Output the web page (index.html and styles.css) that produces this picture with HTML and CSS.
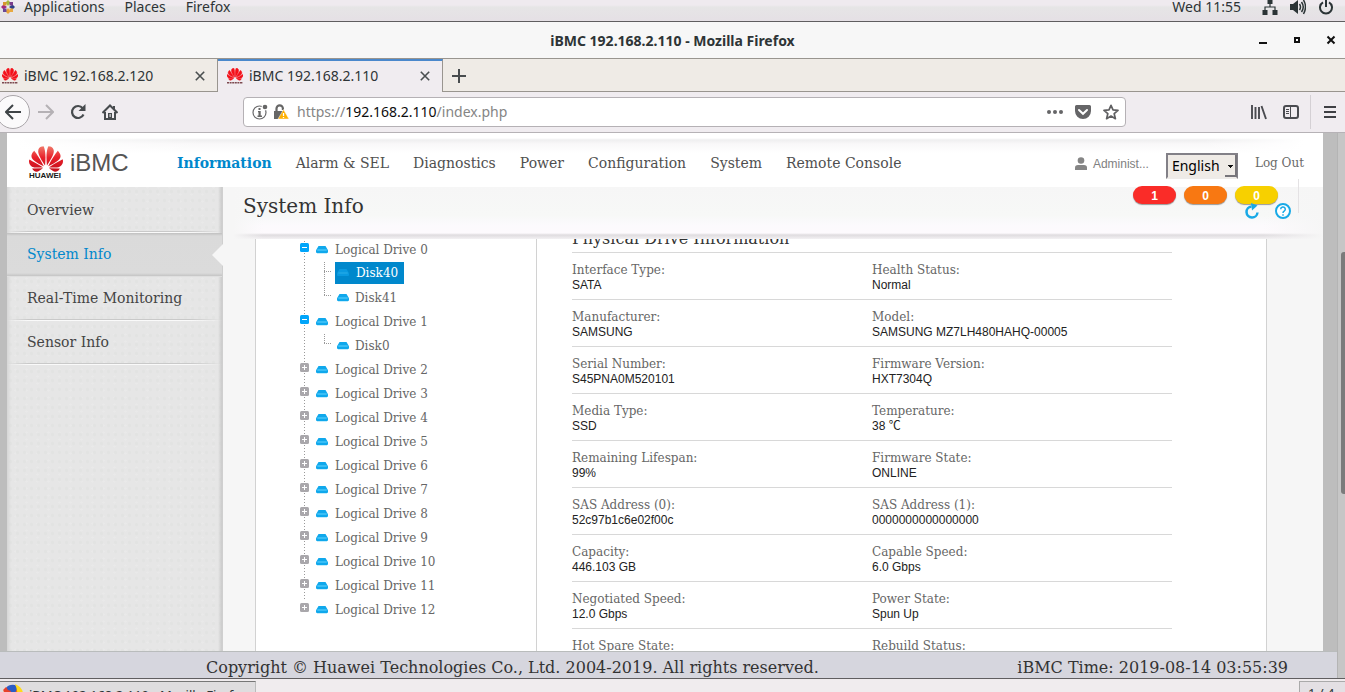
FILE: index.html
```html
<!DOCTYPE html>
<html lang="en">
<head>
<meta charset="utf-8">
<title>iBMC 192.168.2.110</title>
<link rel="stylesheet" href="styles.css">
</head>
<body>
<svg class="defs" aria-hidden="true">
  <defs>
    <linearGradient id="petal" x1="0" y1="0" x2="0" y2="1"><stop offset="0" stop-color="#f0796a"/><stop offset=".45" stop-color="#e8202a"/><stop offset="1" stop-color="#c4101c"/></linearGradient>
    <path id="petals" d="M3.67 6.14S1.82 7.91 1.72 9.78v.35c.08 1.51 1.22 2.4 1.22 2.4 1.83 1.79 6.26 4.04 7.3 4.55 0 0 .06.03.1-.01l.02-.04v-.04C7.52 10.8 3.67 6.14 3.67 6.14zM9.65 18.6c-.02-.08-.1-.08-.1-.08l-7.38.26c.8 1.43 2.15 2.53 3.56 2.2.96-.25 3.16-1.78 3.88-2.3.06-.05.04-.09.04-.09zm.08-.78C6.49 15.63.21 12.28.21 12.28c-.15.46-.2.9-.21 1.3v.07c0 1.07.4 1.82.4 1.82.8 1.69 2.34 2.2 2.34 2.2.7.3 1.4.31 1.4.31.12.02 4.4 0 5.54 0 .05 0 .08-.05.08-.05v-.06c0-.03-.03-.05-.03-.05zM9.06 3.19a3.42 3.42 0 00-2.57 3.15v.41c.03.6.16 1.05.16 1.05.66 2.9 3.86 7.65 4.55 8.65.05.05.1.03.1.03a.1.1 0 00.06-.1c1.06-10.6-1.11-13.42-1.11-13.42-.32.02-1.19.23-1.19.23zm8.299 2.27s-.49-1.8-2.44-2.28c0 0-.57-.14-1.17-.22 0 0-2.18 2.81-1.12 13.43.01.07.06.08.06.08.07.03.1-.03.1-.03.72-1.03 3.9-5.76 4.55-8.64 0 0 .36-1.4.02-2.34zm-2.92 13.07s-.07 0-.09.05c0 0-.01.07.03.1.7.51 2.85 2 3.88 2.3 0 0 .16.05.43.06h.14c.69-.02 1.9-.37 3-2.26l-7.4-.25zm7.83-8.41c.14-2.06-1.94-3.97-1.94-3.98 0 0-3.85 4.66-6.67 10.8 0 0-.03.08.02.13l.04.01h.06c1.06-.53 5.46-2.77 7.28-4.54 0 0 1.15-.93 1.21-2.42zm1.52 2.14s-6.28 3.37-9.52 5.55c0 0-.05.04-.03.11 0 0 .03.06.07.06 1.16 0 5.56 0 5.67-.02 0 0 .57-.02 1.27-.29 0 0 1.56-.5 2.37-2.27 0 0 .73-1.45.17-3.14z"/>
    <symbol id="favicon" viewBox="0 0 16 16"><g transform="translate(0 -1.8) scale(.667)" fill="#f4101a" stroke="#f4101a" stroke-width=".6"><use href="#petals"/></g><path d="M0 14.800h16" stroke="#7c4a50" stroke-width="1.600" stroke-dasharray="2 .6"/></symbol>
    <symbol id="drive" viewBox="0 0 12 8"><path d="M2.500 0h7L12 4.200V6a1 1 0 0 1-1 1H1a1 1 0 0 1-1-1V4.200z" fill="#10a8ec"/><path d="M1.300 3.300h9.400v1.400H1.300z" fill="#4cc8fa"/><path d="M1 7h10v1H1z" fill="#c5edfc"/></symbol>
    <symbol id="drive-on" viewBox="0 0 12 8"><path d="M2.500 0h7L12 4.200V6a1 1 0 0 1-1 1H1a1 1 0 0 1-1-1V4.200z" fill="#0a9ae0"/><path d="M1.300 3.300h9.400v1.400H1.300z" fill="#22a9e6"/></symbol>
    <symbol id="minus" viewBox="0 0 9 9"><rect width="9" height="9" rx="1.500" fill="#00a5fa"/><path d="M2 4.500h5" stroke="#fff"/></symbol>
    <symbol id="plus" viewBox="0 0 9 9"><rect width="9" height="9" rx="1.500" fill="#a9a7ab"/><path d="M2 4.500h5M4.500 2v5" stroke="#fff"/></symbol>
    <symbol id="cross" viewBox="0 0 10 10"><path d="M.8.8l8.400 8.400M9.200.8L.8 9.200" stroke="#4a4f50" stroke-width="1.600"/></symbol>
  </defs>
</svg>

<div class="desktop-bar">
  <svg class="distro" viewBox="0 0 14 14"><path d="M7 0l2.500 2.500L7 6 4.500 2.500z" fill="#a6ba3c"/><path d="M7 14l2.500-2.500L7 8l-2.500 3.500z" fill="#e8a33a"/><path d="M0 7l2.500-2.500L6 7 2.500 9.500z" fill="#a32a7e"/><path d="M14 7l-2.500-2.500L8 7l3.500 2.500z" fill="#2e3f86"/><path d="M2 2h3.500v3.500H2z" fill="#d8962e"/><path d="M8.500 2H12v3.500H8.500z" fill="#7a3c8c"/><path d="M2 8.500h3.500V12H2z" fill="#6a4798"/><path d="M8.500 8.500H12V12H8.500z" fill="#e8a942"/></svg>
  <nav class="desktop-menu"><a href="#">Applications</a><a href="#">Places</a><a href="#">Firefox</a></nav>
  <span class="clock">Wed 11:55</span>
  <div class="tray">
    <svg width="16" height="16" viewBox="0 0 16 16" fill="#2b3436"><path d="M5.500 0h5v5h-5zM.5 11h5v5h-5zM10.500 11h5v5h-5z"/><path d="M8 5v3M3 11V8h10v3" fill="none" stroke="#2b3436" stroke-width="1.200"/></svg>
    <svg width="16" height="16" viewBox="0 0 16 16"><path d="M0 5h3l5-4v14l-5-4H0z" fill="#2b3436"/><path d="M9.500 5q2 3 0 6M11.500 3q3.500 5 0 10M13.500 1q4 7 0 14" fill="none" stroke="#2b3436" stroke-width="1.500"/></svg>
    <svg width="16" height="16" viewBox="0 0 16 16" fill="none" stroke="#2b3436" stroke-width="2"><path d="M5 3.300a6 6 0 1 0 6 0M8 0v8"/></svg>
  </div>
</div>

<header class="titlebar">
  <span class="window-title">iBMC 192.168.2.110 - Mozilla Firefox</span>
  <div class="window-buttons">
    <button aria-label="Minimize"><svg width="10" height="10"><path d="M1 8h8" stroke="#111" stroke-width="2"/></svg></button>
    <button aria-label="Maximize"><svg width="10" height="10"><path d="M3 3h4v4H3z" fill="#fff" stroke="#111" stroke-width="2"/></svg></button>
    <button aria-label="Close"><svg width="10" height="10"><path d="M1.500 1.500l7 7M8.500 1.500l-7 7" stroke="#111" stroke-width="2"/></svg></button>
  </div>
</header>

<div class="tabs">
  <div class="tab"><svg class="fav"><use href="#favicon"/></svg><span>iBMC 192.168.2.120</span><button aria-label="Close tab"><svg width="10" height="10"><use href="#cross"/></svg></button></div>
  <div class="tab active"><svg class="fav"><use href="#favicon"/></svg><span>iBMC 192.168.2.110</span><button aria-label="Close tab"><svg width="10" height="10"><use href="#cross"/></svg></button></div>
  <button class="new-tab" aria-label="New tab"><svg width="14" height="14"><path d="M7 0v14M0 7h14" stroke="#484c4e" stroke-width="2"/></svg></button>
</div>

<div class="toolbar">
  <button class="back" aria-label="Back"><svg width="16" height="16" fill="none" stroke="#3f4447" stroke-width="2"><path d="M16 8H1.500M8 1L1 8l7 7"/></svg></button>
  <div class="nav-buttons">
    <button aria-label="Forward"><svg width="16" height="16" fill="none" stroke="#b5b1b5" stroke-width="2"><path d="M0 8h14.500M8 1l7 7-7 7"/></svg></button>
    <button aria-label="Reload"><svg width="16" height="16"><path d="M13.500 10.500a6 6 0 1 1-.8-6.300" fill="none" stroke="#474b4e" stroke-width="2.200"/><path d="M15.500 0v7h-7z" fill="#474b4e"/></svg></button>
    <button aria-label="Home"><svg width="16" height="16"><path d="M.5 9L8 1.500 15.500 9M3 8v7h10V8" fill="none" stroke="#474b4e" stroke-width="2"/><path d="M6 9h4v6H6zM11 2h2v3h-2z" fill="#474b4e"/><path d="M7.500 10h1.200v3H7.500z" fill="#ddd"/></svg></button>
  </div>
  <div class="urlbar">
    <svg width="16" height="16"><circle cx="7.500" cy="8.500" r="6.500" fill="none" stroke="#69696b" stroke-width="1.200"/><circle cx="13" cy="3" r="3.400" fill="#fff"/><circle cx="13" cy="3" r="2.300" fill="#666"/><path d="M6.500 4h2v2h-2zM6 7h2.700v4.500H10V13H5.500v-1.500h1V8.300H6z" fill="#666"/></svg>
    <svg width="17" height="16"><path d="M4.500 8V4.500a3.200 3.200 0 0 1 6.400 0V6" fill="none" stroke="#666" stroke-width="2.200"/><path d="M2 7h10v8H2z" fill="#666"/><path d="M11.500 5.500l5.500 9.500H6z" fill="#ffb000" stroke="#fff" stroke-width=".5"/><path d="M11.500 9v3M11.500 13v1" stroke="#fff" stroke-width="1.300"/></svg>
    <a class="url" href="#">https://<b>192.168.2.110</b>/index.php</a>
    <div class="url-actions">
      <svg width="16" height="16" fill="#656567"><circle cx="2" cy="8" r="2"/><circle cx="8" cy="8" r="2"/><circle cx="14" cy="8" r="2"/></svg>
      <svg width="16" height="16"><path d="M1.500 1h13A1.500 1.500 0 0 1 16 2.500V7A8 8 0 0 1 0 7V2.500A1.500 1.500 0 0 1 1.500 1z" fill="#656567"/><path d="M4 6l4 3.800L12 6" fill="none" stroke="#fff" stroke-width="2" stroke-linecap="round"/></svg>
      <svg width="16" height="16"><path d="M8 1.300l2 4.600 5 .5-3.800 3.300 1.200 5L8 12.100l-4.400 2.600 1.200-5L1 6.400l5-.5z" fill="none" stroke="#5f5f61" stroke-width="1.700" stroke-linejoin="round"/></svg>
    </div>
  </div>
  <div class="right-buttons">
    <button aria-label="Library"><svg width="16" height="16" stroke="#4a4b50" stroke-width="1.900"><path d="M1 1v14M4.500 3v12M8 3v12M10.500 2l4.500 13"/></svg></button>
    <button aria-label="Sidebar"><svg width="16" height="16" fill="none" stroke="#4a4b50"><rect x="1" y="2" width="14" height="12" rx="2" stroke-width="2"/><path d="M7.500 2v12M3 5.500h3M3 7.500h3M3 9.500h3"/></svg></button>
  </div>
  <button class="menu" aria-label="Menu"><svg width="12" height="12" stroke="#3f4044" stroke-width="2"><path d="M0 1h12M0 6h12M0 11h12"/></svg></button>
</div>

<div class="viewport">
  <div class="page">
    <div class="site">
      <header class="site-header">
        <div class="brand">
          <div class="mark"><svg viewBox="0 2.900 24 18.200"><use href="#petals" fill="url(#petal)"/></svg><span>HUAWEI</span></div>
          <span class="product">iBMC</span>
        </div>
        <nav class="main-nav"><a class="current" href="#">Information</a><a href="#">Alarm &amp; SEL</a><a href="#">Diagnostics</a><a href="#">Power</a><a href="#">Configuration</a><a href="#">System</a><a href="#">Remote Console</a></nav>
        <div class="account">
          <svg width="12" height="13" fill="#858585"><circle cx="6" cy="3.500" r="3.300"/><path d="M0 13v-2.500Q0 8 3 8h6q3 0 3 2.500V13z"/></svg>
          <span class="user">Administ...</span>
          <label class="lang"><select aria-label="Language"><option>English</option></select><i></i></label>
          <a class="logout" href="#">Log Out</a>
        </div>
      </header>
      <div class="site-body">
        <nav class="side">
          <a href="#">Overview</a><a class="current" href="#">System Info</a><a href="#">Real-Time Monitoring</a><a href="#">Sensor Info</a>
        </nav>
        <main class="content">
          <div class="page-head">
            <h1>System Info</h1>
            <div class="alarms"><span class="red">1</span><span class="orange">0</span><span class="yellow">0</span></div>
            <div class="page-tools">
              <button aria-label="Refresh"><svg width="16" height="16"><path d="M8.500 3.500a5.500 5.500 0 1 0 6 6" fill="none" stroke="#18a9e6" stroke-width="2.500"/><path d="M8 0l6.500 2.500L9 7.500z" fill="#18a9e6"/></svg></button>
              <button aria-label="Help"><svg width="16" height="16"><circle cx="8" cy="8" r="7" fill="#fff" stroke="#18a9e6" stroke-width="2"/><path d="M5.700 6.300a2.300 2.300 0 1 1 3.500 1.900Q8 9 8 10M8 11.200v1.600" fill="none" stroke="#18a9e6" stroke-width="1.500"/></svg></button>
            </div>
          </div>
          <div class="panel">
            <ul class="tree">
              <li><a class="row" href="#"><svg class="tg"><use href="#minus"/></svg><svg class="dr"><use href="#drive"/></svg>Logical Drive 0</a>
                <ul>
                  <li><a class="node selected" href="#"><svg class="dr"><use href="#drive-on"/></svg>Disk40</a></li>
                  <li><a class="node" href="#"><svg class="dr"><use href="#drive"/></svg>Disk41</a></li>
                </ul></li>
              <li><a class="row" href="#"><svg class="tg"><use href="#minus"/></svg><svg class="dr"><use href="#drive"/></svg>Logical Drive 1</a>
                <ul>
                  <li><a class="node" href="#"><svg class="dr"><use href="#drive"/></svg>Disk0</a></li>
                </ul></li>
              <li><a class="row" href="#"><svg class="tg"><use href="#plus"/></svg><svg class="dr"><use href="#drive"/></svg>Logical Drive 2</a></li>
              <li><a class="row" href="#"><svg class="tg"><use href="#plus"/></svg><svg class="dr"><use href="#drive"/></svg>Logical Drive 3</a></li>
              <li><a class="row" href="#"><svg class="tg"><use href="#plus"/></svg><svg class="dr"><use href="#drive"/></svg>Logical Drive 4</a></li>
              <li><a class="row" href="#"><svg class="tg"><use href="#plus"/></svg><svg class="dr"><use href="#drive"/></svg>Logical Drive 5</a></li>
              <li><a class="row" href="#"><svg class="tg"><use href="#plus"/></svg><svg class="dr"><use href="#drive"/></svg>Logical Drive 6</a></li>
              <li><a class="row" href="#"><svg class="tg"><use href="#plus"/></svg><svg class="dr"><use href="#drive"/></svg>Logical Drive 7</a></li>
              <li><a class="row" href="#"><svg class="tg"><use href="#plus"/></svg><svg class="dr"><use href="#drive"/></svg>Logical Drive 8</a></li>
              <li><a class="row" href="#"><svg class="tg"><use href="#plus"/></svg><svg class="dr"><use href="#drive"/></svg>Logical Drive 9</a></li>
              <li><a class="row" href="#"><svg class="tg"><use href="#plus"/></svg><svg class="dr"><use href="#drive"/></svg>Logical Drive 10</a></li>
              <li><a class="row" href="#"><svg class="tg"><use href="#plus"/></svg><svg class="dr"><use href="#drive"/></svg>Logical Drive 11</a></li>
              <li><a class="row" href="#"><svg class="tg"><use href="#plus"/></svg><svg class="dr"><use href="#drive"/></svg>Logical Drive 12</a></li>
            </ul>
            <section class="detail">
              <h2>Physical Drive Information</h2>
              <dl>
                <div><dt>Interface Type:</dt><dd>SATA</dd></div><div><dt>Health Status:</dt><dd>Normal</dd></div>
                <div><dt>Manufacturer:</dt><dd>SAMSUNG</dd></div><div><dt>Model:</dt><dd>SAMSUNG MZ7LH480HAHQ-00005</dd></div>
                <div><dt>Serial Number:</dt><dd>S45PNA0M520101</dd></div><div><dt>Firmware Version:</dt><dd>HXT7304Q</dd></div>
                <div><dt>Media Type:</dt><dd>SSD</dd></div><div><dt>Temperature:</dt><dd>38 ℃</dd></div>
                <div><dt>Remaining Lifespan:</dt><dd>99%</dd></div><div><dt>Firmware State:</dt><dd>ONLINE</dd></div>
                <div><dt>SAS Address (0):</dt><dd>52c97b1c6e02f00c</dd></div><div><dt>SAS Address (1):</dt><dd>0000000000000000</dd></div>
                <div><dt>Capacity:</dt><dd>446.103 GB</dd></div><div><dt>Capable Speed:</dt><dd>6.0 Gbps</dd></div>
                <div><dt>Negotiated Speed:</dt><dd>12.0 Gbps</dd></div><div><dt>Power State:</dt><dd>Spun Up</dd></div>
                <div><dt>Hot Spare State:</dt></div><div><dt>Rebuild Status:</dt></div>
              </dl>
            </section>
          </div>
        </main>
      </div>
    </div>
    <footer class="site-footer"><span>Copyright © Huawei Technologies Co., Ltd. 2004-2019. All rights reserved.</span><span>iBMC Time: 2019-08-14 03:55:39</span></footer>
  </div>
  <div class="scrollbar"><div class="thumb"></div></div>
</div>

<div class="taskbar">
  <button class="task"><svg width="21" height="21" viewBox="0 0 21 21"><circle cx="10.500" cy="11" r="9.500" fill="#f26a1c"/><path d="M4 4Q7 0 13 1l3 2-3 6-7 2z" fill="#2c5cc5"/><path d="M1 6l3-3 2 3 3 1-2 7z" fill="#e8402a"/><path d="M13 0q7 3 8 9-1 8-8 11 5-8 0-20z" fill="#ffd91c"/></svg><span>iBMC 192.168.2.110 - Mozilla Firef...</span></button>
  <span class="pager">1 / 4</span>
</div>
</body>
</html>
```

FILE: styles.css
```css
* { box-sizing: border-box; }

body {
  margin: 0;
  height: 100vh;
  display: flex;
  flex-direction: column;
  overflow: hidden;
  background: #f0ecf0;
  font-family: "Noto Sans", sans-serif;
  font-size: 14px;
  color: #2e3436;
}

.defs { position: absolute; width: 0; height: 0; }
a { color: inherit; text-decoration: none; }
button { border: 0; padding: 0; background: none; font: inherit; color: inherit; display: flex; align-items: center; justify-content: center; }
svg { display: block; flex: none; }
ul, dl, dd, h1, h2 { margin: 0; padding: 0; list-style: none; font-weight: normal; }

/* Desktop panel */
.desktop-bar {
  flex: none;
  height: 22px;
  display: flex;
  align-items: center;
  padding: 0 11px 8px 1px;
  background: linear-gradient(#efeaef 0 5px, #e6e5e6 7px, #e5e0e5);
  border-bottom: 1px solid #605e60;
}
.distro { width: 14px; height: 14px; }
.desktop-menu { display: flex; gap: 20px; margin-left: 9px; }
.clock { margin-left: auto; }
.tray { display: flex; gap: 12px; margin-left: 21px; }

.titlebar {
  flex: none;
  height: 37px;
  display: grid;
  grid-template-columns: 1fr auto 1fr;
  align-items: center;
  background: #f7f7f7;
  border-bottom: 1px solid #99958f;
}
.window-title { grid-column: 2; font-weight: bold; }
.window-buttons { display: flex; gap: 24px; justify-content: flex-end; padding-right: 9px; }

.tabs {
  flex: none;
  height: 33px;
  display: flex;
  background: linear-gradient(#99958f, #99958f) left bottom / 100% 1px no-repeat #efebe6;
}
.tab {
  width: 218px;
  display: flex;
  align-items: center;
  padding: 0 12px 0 2px;
  border-right: 1px solid #99958f;
}
.tab.active { width: 225px; padding: 0 12px 2px 9px; background: #f0ecf0; border-top: 2px solid #4a88cc; }
.tab span { flex: 1; margin-left: 6px; }
.fav { width: 16px; height: 16px; }
.new-tab { width: 32px; }

.toolbar {
  flex: none;
  height: 41px;
  display: flex;
  align-items: center;
  border-bottom: 1px solid #b6b2b6;
}
.back { width: 34px; height: 34px; margin-left: -4px; border: 1px solid #a9a5a9; border-radius: 50%; background: #fbfafb; }
.nav-buttons { display: flex; gap: 16px; margin-left: 8px; }
.urlbar {
  flex: 1;
  height: 30px;
  display: flex;
  align-items: center;
  gap: 4px;
  margin-left: 125px;
  padding: 0 6px 0 8px;
  border: 1px solid #b5b1b5;
  border-radius: 4px;
  background: #fff;
}
.url { flex: 1; margin-left: 4px; padding-bottom: 2px; color: #858585; }
.url b { font-weight: normal; color: #0c0c0d; }
.url-actions { display: flex; gap: 12px; }
.right-buttons { display: flex; gap: 16px; margin-left: 125px; }
.menu { height: 34px; width: 35px; margin-left: 11px; padding-left: 4px; border-left: 1px solid #d4d0d4; }

/* Web page */
.viewport { flex: 1; min-height: 0; display: flex; }
.page { flex: 1; min-width: 0; display: flex; flex-direction: column; font-family: "DejaVu Serif", serif; }
.site { flex: 1; min-height: 0; display: flex; flex-direction: column; padding: 0 14px 0 7px; background: #bdbdbd; }

.site-header {
  flex: none;
  height: 54px;
  display: flex;
  align-items: center;
  padding: 6px 19px 0 22px;
  background: linear-gradient(90deg, #fff 10px, transparent 200px, transparent calc(100% - 120px), #fff calc(100% - 20px)), linear-gradient(#fff 5px, #efeff0 7px, #f9f8f9 11px, #fff 20px);
  color: #4f4f4f;
}
.brand { display: flex; align-items: center; gap: 7px; width: 148px; }
.mark { width: 34px; font: bold 8px/8px "Liberation Sans", sans-serif; color: #1a1a1a; }
.mark svg { width: 34px; height: 26px; }
.product { font: 24px/28px "Liberation Sans", sans-serif; color: #555; }
.main-nav { display: flex; gap: 24px; font-size: 14px; white-space: nowrap; }
.main-nav .current { color: #0088cc; font-weight: bold; }
.account { display: flex; align-items: center; margin-left: auto; font-size: 12px; color: #6a6a6a; }
.user { margin: 2px 17px 0 6px; font-family: "Liberation Sans", sans-serif; color: #808080; }
.lang { position: relative; margin-right: 17px; padding-top: 5px; }
.lang select {
  display: block;
  appearance: none;
  width: 72px;
  height: 26px;
  padding: 0 0 0 4px;
  border: 2px solid #828087;
  border-bottom-color: #eeebe8;
  border-radius: 0;
  background: #efebe6;
  font: 14px "Noto Sans", sans-serif;
  color: #000;
}
.lang i {
  position: absolute;
  right: 1px;
  bottom: 2px;
  width: 12px;
  height: 22px;
  border-right: 2px solid #77757a;
  border-bottom: 2px solid #77757a;
  background: linear-gradient(#111, #111) 3px 10px / 5px 1px no-repeat, linear-gradient(#111, #111) 4px 11px / 3px 1px no-repeat, linear-gradient(#111, #111) 5px 12px / 1px 1px no-repeat, #efebe6;
}

.site-body { flex: 1; min-height: 0; display: flex; }
.side {
  flex: none;
  width: 216px;
  padding-top: 2px;
  background: linear-gradient(90deg, #d6d6d6, transparent 4px, transparent 211px, #cbcbcb), radial-gradient(#e2e3e2 1px, transparent 2px) 0 0 / 7px 9px, radial-gradient(#e9e9e9 1px, transparent 2px) 3px 4px / 11px 7px, #e6e6e6;
  border-right: 1px solid #cfcfcf;
  color: #444;
}
.side a {
  display: flex;
  align-items: center;
  height: 44px;
  padding: 0 0 2px 20px;
  background: linear-gradient(90deg, transparent, #c9c9c9 10%, #c9c9c9 85%, transparent) left bottom 1px / 100% 1px no-repeat, linear-gradient(90deg, transparent, #fafafa 10%, #fafafa 85%, transparent) left bottom / 100% 1px no-repeat;
}
.side .current {
  position: relative;
  color: #0088cc;
  background: linear-gradient(#c0c0c0, #dadada 3px, #dbdbdb 40px, #c4c4c4 43px, #fafafa);
}
.side .current::after {
  content: "";
  position: absolute;
  right: -1px;
  top: 11px;
  border: 11px solid transparent;
  border-left: 0;
  border-right-color: #f6f6f6;
}

.content { flex: 1; min-width: 0; display: flex; flex-direction: column; background: #f6f6f6; }
.page-head {
  position: relative;
  flex: none;
  height: 52px;
  padding: 5px 20px;
  background: linear-gradient(90deg, #f6f6f6 10px, transparent 40px, transparent calc(100% - 60px), #f6f6f6), linear-gradient(#f6f6f6, #f7f8f7 28px, #fcfafd 38px, #fdfafd 46px, #dfdcdf 48px, #f3f1f3);
}
h1 { font-size: 20px; line-height: 28px; color: #333; }
.alarms { position: absolute; right: 45px; top: -1px; display: flex; gap: 8px; }
.alarms span {
  width: 43px;
  height: 18px;
  border-radius: 9px;
  box-shadow: 0 1px 1px #999;
  font: bold 12px/20px "Liberation Sans", sans-serif;
  text-align: center;
  color: #fff;
}
.alarms .red { background: #fa2c28; }
.alarms .orange { background: #f87812; }
.alarms .yellow { background: #f7d000; }
.page-tools { position: absolute; right: 24px; top: -8px; height: 34px; padding: 0 7px 0 0; display: flex; align-items: flex-end; gap: 16px; border-right: 1px solid #e4e2e4; }
.page-tools button { margin-bottom: -6px; }

.panel {
  flex: 1;
  min-height: 0;
  display: flex;
  margin: 0 56px 0 32px;
  overflow: hidden;
  background: #fff;
  border: 1px solid #d2d2d2;
  border-width: 0 1px;
}
.tree {
  flex: none;
  width: 281px;
  margin-top: -1px;
  padding-left: 44px;
  border-right: 1px solid #d2d2d2;
  background: repeating-linear-gradient(#999 0 1px, transparent 1px 3px) 48px 0 / 1px 363px no-repeat;
  font-size: 12px;
  color: #666;
}
.row { display: flex; align-items: center; height: 24px; }
.tg { width: 9px; height: 9px; margin: 0 7px 6px 0; }
.dr { width: 12px; height: 8px; margin-right: 7px; }
.tree ul { padding-left: 24px; }
.tree ul li {
  height: 24px;
  padding-left: 11px;
  background: repeating-linear-gradient(#999 0 1px, transparent 1px 2px) 0 0 / 1px 100% no-repeat, repeating-linear-gradient(90deg, #999 0 1px, transparent 1px 2px) 0 9px / 7px 1px no-repeat;
}
.tree ul li:last-child { background-size: 1px 10px, 7px 1px; }
.node { display: flex; width: max-content; align-items: center; height: 24px; padding: 0 6px 0 2px; }
.node .dr { margin-right: 6px; }
.node.selected { height: 22px; background: #0088cc; color: #fff; }
.node.selected .dr { margin-right: 7px; }

.detail { flex: 1; max-width: 635px; margin-top: -14px; padding-left: 35px; }
h2 { font-size: 16px; line-height: 27px; border-bottom: 1px solid #d8d8d8; color: #333; }
dl { display: grid; grid-template-columns: 1fr 1fr; font-size: 12px; line-height: 15px; }
dl div { height: 47px; padding-top: 10px; border-bottom: 1px solid #d8d8d8; }
dt { color: #666; }
dd { font-family: "Liberation Sans", "Noto Sans CJK SC", sans-serif; color: #222; }

.site-footer {
  flex: none;
  height: 27px;
  display: flex;
  justify-content: space-between;
  padding: 0 49px 0 206px;
  border-top: 1px solid #b9bcbc;
  background: #d6d6de;
  font-size: 16px;
  line-height: 31px;
  white-space: nowrap;
  color: #333;
}
.scrollbar { flex: none; width: 8px; padding: 119px 0 0 3px; border-left: 1px solid #b4b4b4; background: #c6c6c6; }
.thumb { height: 242px; border-radius: 3px 0 0 3px; background: #7b7b7b; }

.taskbar {
  flex: none;
  height: 14px;
  display: flex;
  justify-content: space-between;
  padding-top: 2px;
  overflow: hidden;
  border-top: 1px solid #605e60;
  background: #f0ecee;
  font-size: 13px;
}
.task { width: 256px; height: 26px; justify-content: flex-start; padding-left: 2px; background: #dfdddf; border-top: 1px solid #777; border-right: 1px solid #bbb; }
.task span { margin-left: 6px; }
.pager { width: 46px; padding-left: 8px; line-height: 22px; border: 1px solid #aaa; border-width: 1px 0 0 1px; background: #e4e0e4; }
```
